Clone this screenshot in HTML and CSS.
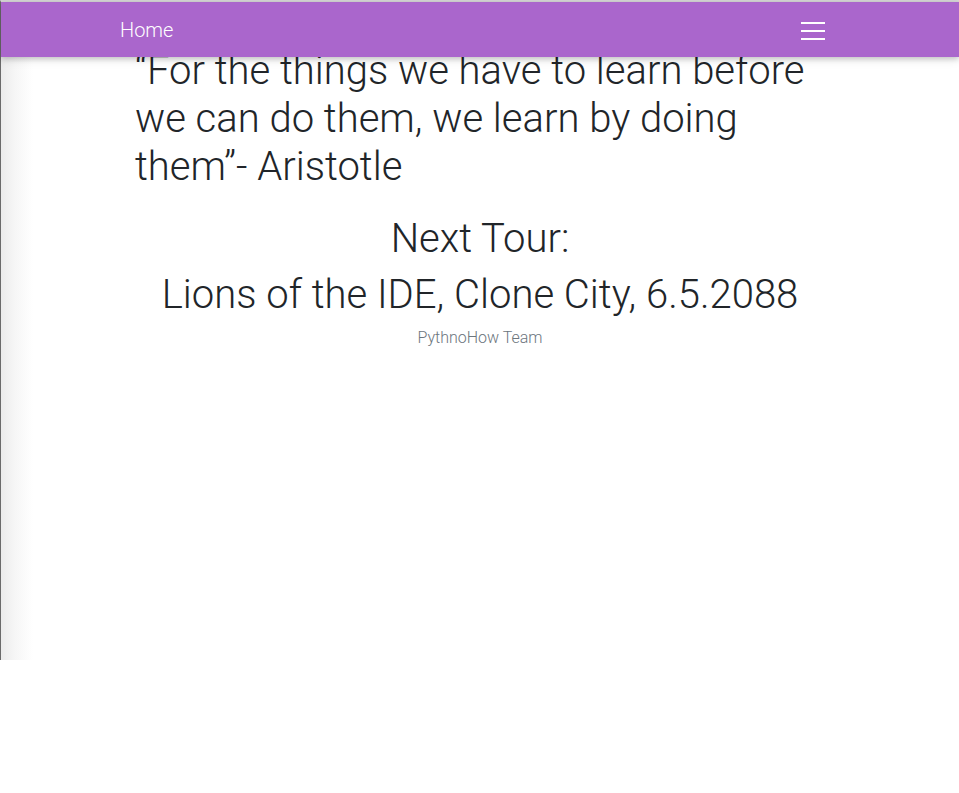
FILE: index.html
```html
<!DOCTYPE html>
<html lang="en">
<head>
<meta charset="utf-8">
<title>PythnoHow</title>
<link rel="stylesheet" href="styles.css">
</head>
<body>
<div class="frame">
  <nav class="navbar">
    <div class="nav-inner">
      <a class="brand" href="#">Home</a>
      <button class="toggler" aria-label="Menu">
        <svg width="26" height="20" viewBox="0 0 26 20"><g stroke="#fff" stroke-width="2"><line x1="1" y1="3" x2="25" y2="3"/><line x1="1" y1="11" x2="25" y2="11"/><line x1="1" y1="19" x2="25" y2="19"/></g></svg>
      </button>
    </div>
  </nav>
  <main class="container">
    <h2 class="quote">“For the things we have to learn before we can do them, we learn by doing them”- Aristotle</h2>
    <h2 class="tour">Next Tour:</h2>
    <h2 class="tour">Lions of the IDE, Clone City, 6.5.2088</h2>
    <p class="team">PythnoHow Team</p>
  </main>
</div>
</body>
</html>
```
FILE: styles.css
```css
html, body {
  margin: 0;
  padding: 0;
  background: #fff;
}
body {
  font-family: Roboto, "Noto Sans", sans-serif;
  font-weight: 300;
  color: #212529;
}
.frame {
  position: relative;
  height: 658px;
  border-top: 2px solid #d8d8d8;
  border-left: 1px solid #6a6a6a;
  background: linear-gradient(to right, #ebebeb 0, #f6f6f6 14px, #fff 32px);
}
.navbar {
  position: absolute;
  top: 0;
  left: 0;
  right: 0;
  height: 55px;
  background: #aa66cc;
  box-shadow: 0 2px 5px 0 rgba(0,0,0,.16), 0 2px 10px 0 rgba(0,0,0,.12);
  z-index: 2;
}
.nav-inner {
  width: 706px;
  margin: 0 auto;
  padding: 0 14px 0 0;
  height: 100%;
  display: flex;
  align-items: center;
  justify-content: space-between;
}
.brand {
  color: #fff;
  text-decoration: none;
  font-size: 20px;
  font-weight: 300;
  margin-top: 1px;
}
.toggler {
  background: none;
  border: 0;
  padding: 0;
  display: flex;
}
.container {
  width: 690px;
  margin: 0 auto;
  padding: 45px 15px 0;
}
h2 {
  font-weight: 300;
  font-size: 40px;
  line-height: 48px;
  margin: 0;
}
.quote {
  margin-bottom: 24px;
}
.tour {
  text-align: center;
  margin-bottom: 8px;
}
.team {
  text-align: center;
  color: #6c757d;
  font-size: 16px;
  margin: 0;
  line-height: 22px;
}
```
